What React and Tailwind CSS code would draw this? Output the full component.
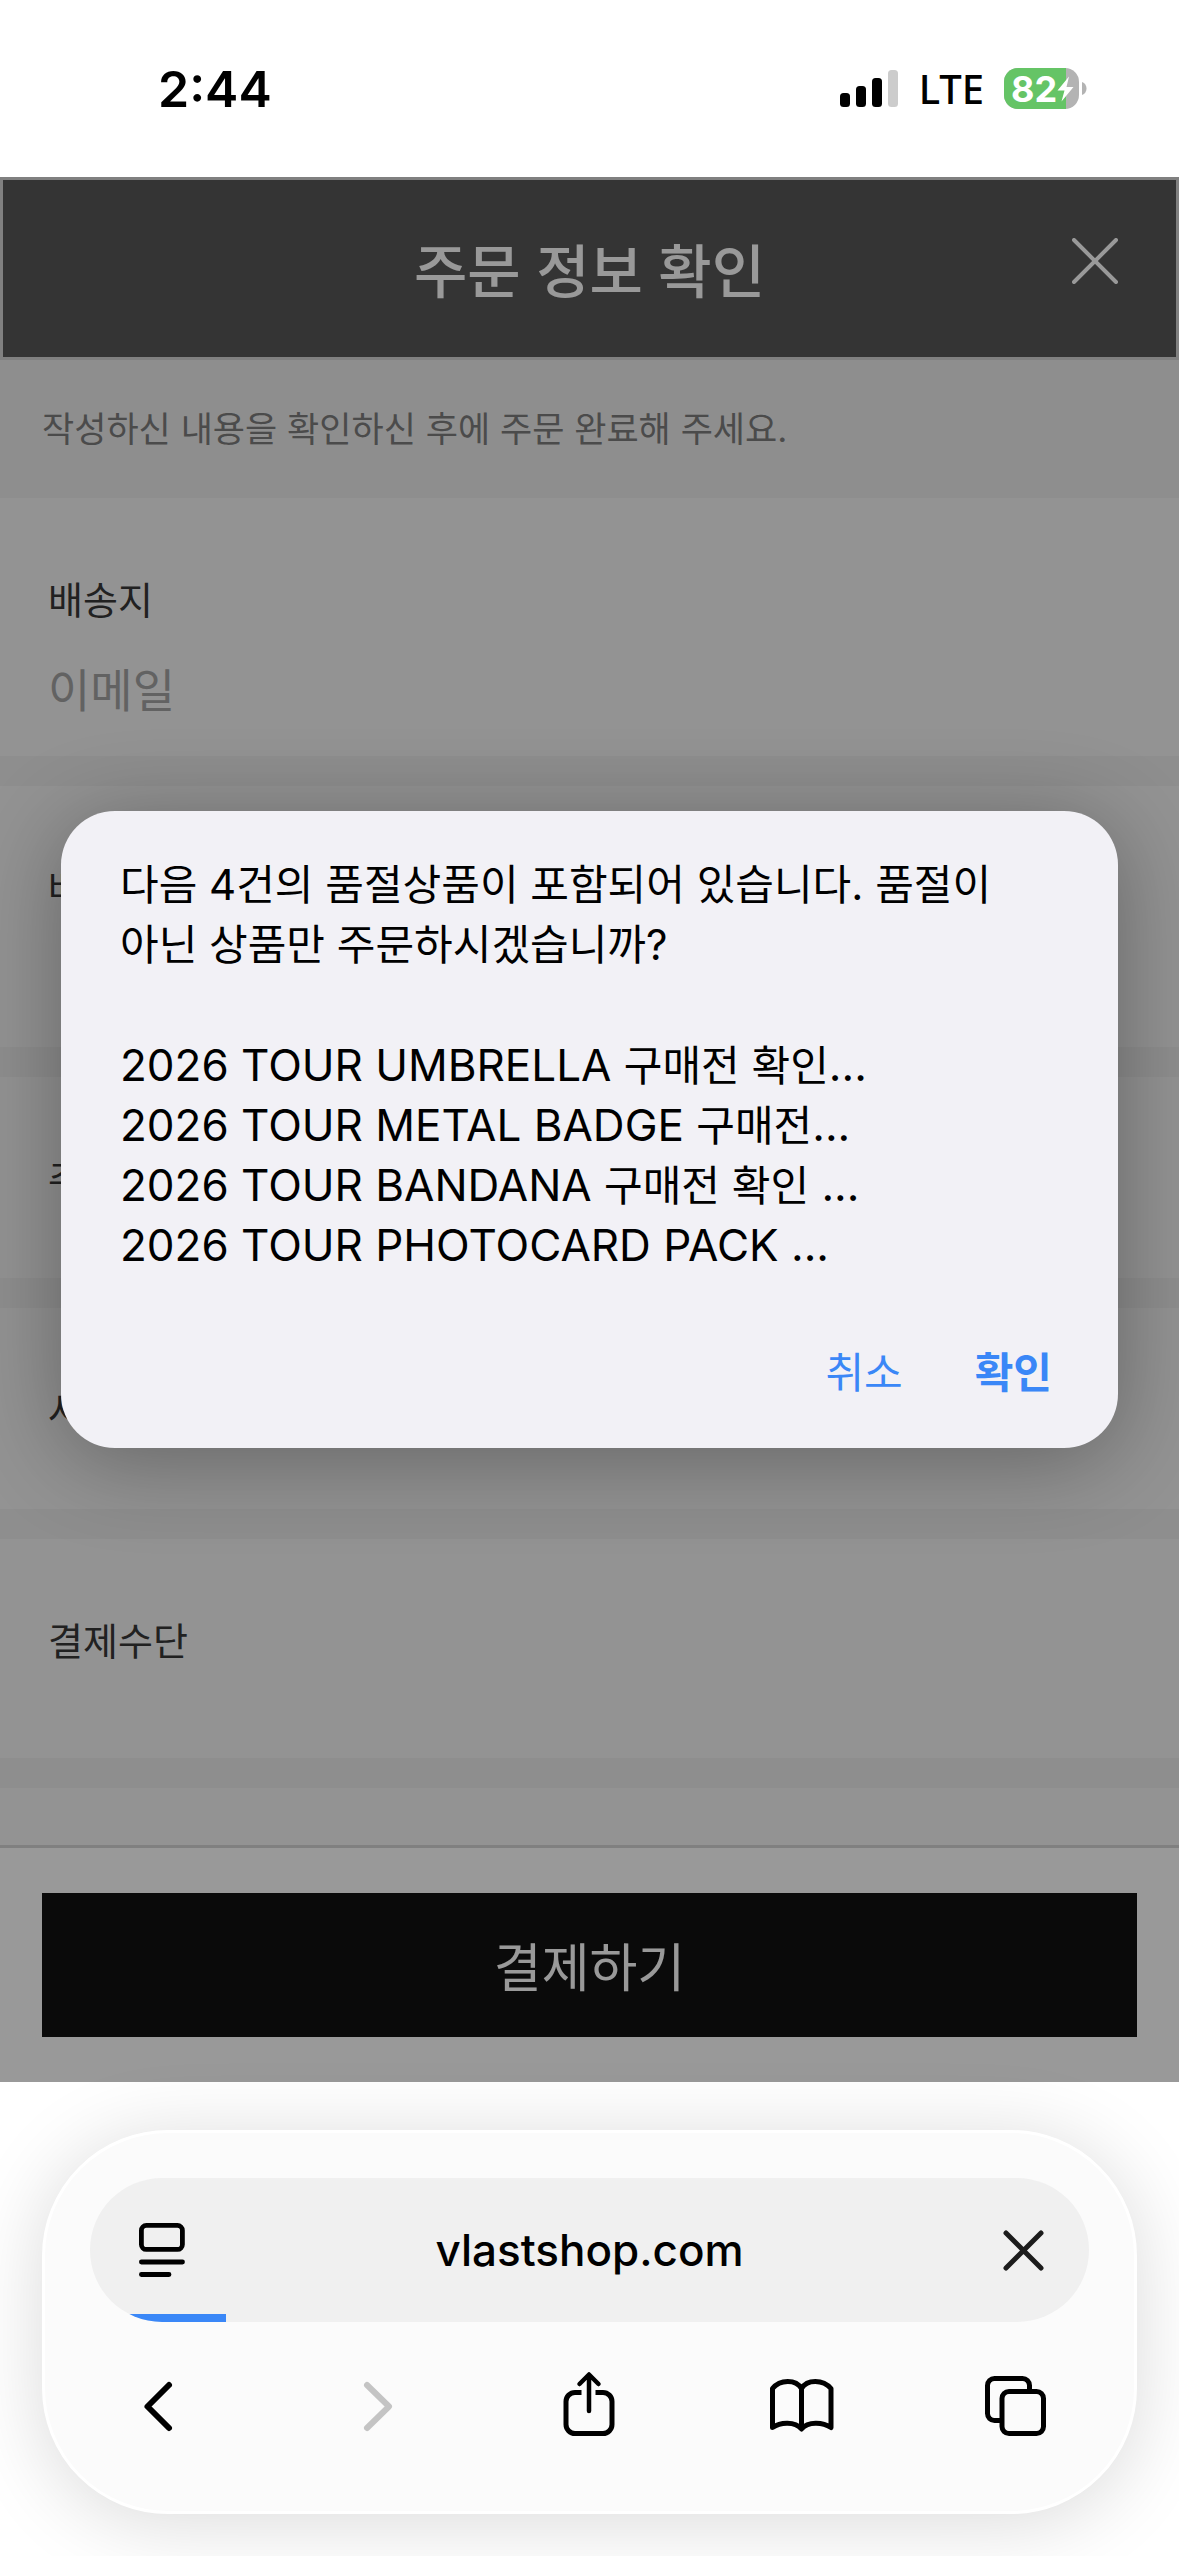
import React, { useState } from "react";

const soldOutItems = [
  { name: "2026 TOUR UMBRELLA ", note: "구매전 확인", tail: "..." },
  { name: "2026 TOUR METAL BADGE ", note: "구매전", tail: "..." },
  { name: "2026 TOUR BANDANA ", note: "구매전 확인", tail: " ..." },
  { name: "2026 TOUR PHOTOCARD PACK ", note: "", tail: "..." },
];

function StatusBar() {
  return (
    <div className="flex h-[177px] items-center justify-between bg-white pr-[92px] pl-[158px]">
      <span className="text-[50px] leading-[60px] font-semibold text-black">2:44</span>
      <div className="flex items-center">
        <svg className="h-[38px] w-[58px]" viewBox="0 0 58 38" aria-hidden="true">
          <rect x="0" y="23" width="10" height="14" rx="3.5" fill="#000" />
          <rect x="16" y="16" width="10" height="21" rx="3.5" fill="#000" />
          <rect x="32" y="8" width="10" height="29" rx="3.5" fill="#000" />
          <rect x="48" y="0" width="10" height="37" rx="3.5" fill="#ccc" />
        </svg>
        <span className="ml-[21px] font-['Noto_Sans',sans-serif] text-[40px] leading-[56px] font-medium text-black">
          LTE
        </span>
        <div className="relative ml-[20px] flex h-[41px] w-[75px] items-center rounded-[14px] bg-[#b3b3b3]">
          <div className="absolute inset-y-0 left-0 w-[62px] rounded-l-[14px] bg-[#65c466]" />
          <span className="relative pl-[7px] text-[36px] leading-[44px] font-bold text-white">82</span>
          <svg className="absolute top-[8px] right-[5px] h-[26px] w-[17px]" viewBox="0 0 17 26" aria-hidden="true">
            <path d="M12 0.5 L0.5 14.5 H7.5 L4.5 25.5 L16.5 11 H9.5 Z" fill="#fff" />
          </svg>
        </div>
        <svg className="ml-[3px] h-[13px] w-[5px]" viewBox="0 0 5 13" aria-hidden="true">
          <path d="M0 0 C6 2 6 11 0 13 Z" fill="#b3b3b3" />
        </svg>
      </div>
    </div>
  );
}

function Section({ title, className, children }) {
  return (
    <section className={`bg-[#f5f5f5] px-[48px] pt-[75px] ${className}`}>
      <h2 className="text-[38px] leading-[54px] text-[#383838]">{title}</h2>
      {children}
    </section>
  );
}

function OrderPage() {
  return (
    <div className="flex flex-1 flex-col bg-[#ededed]">
      <header className="relative flex h-[183px] items-center justify-center border-[3px] border-[#d6d6d6] bg-[#575757]">
        <h1 className="pt-[6px] text-[58px] leading-[72px] font-medium text-white">주문 정보 확인</h1>
        <button type="button" aria-label="닫기" className="absolute top-[58px] right-[58px]">
          <svg className="h-[46px] w-[46px]" viewBox="0 0 46 46" fill="none" stroke="#fff" strokeWidth="4" strokeLinecap="round">
            <path d="M2 2 L44 44 M44 2 L2 44" />
          </svg>
        </button>
      </header>
      <p className="px-[42px] py-[42px] text-[35px] leading-[54px] text-[#7d7d7d]">
        작성하신 내용을 확인하신 후에 주문 완료해 주세요.
      </p>
      <div className="flex flex-1 flex-col gap-[30px]">
        <Section title="배송지" className="pb-[33px]">
          <input
            type="email"
            aria-label="이메일"
            placeholder="이메일"
            className="mt-[30px] block h-[66px] w-full bg-transparent text-[46px] leading-[66px] outline-none placeholder:text-[#a3a3a3]"
          />
        </Section>
        <Section title="배송" className="pb-[132px]" />
        <Section title="주문" className="pb-[72px]" />
        <Section title="사은품" className="pb-[72px]" />
        <Section title="결제수단" className="pb-[90px]" />
        <div className="flex-1 bg-[#f5f5f5]" />
      </div>
      <footer className="border-t-[3px] border-[#d6d6d6] bg-white px-[42px] py-[45px]">
        <button type="button" className="flex h-[144px] w-full items-center justify-center bg-[#111] pt-[8px] text-[52px] text-white">
          결제하기
        </button>
      </footer>
    </div>
  );
}

function SoldOutDialog({ onClose }) {
  return (
    <div className="absolute inset-0 flex items-center bg-black/40 px-[61px]">
      <div
        role="alertdialog"
        aria-describedby="sold-out-message"
        className="w-full rounded-[54px] bg-[#f2f1f6] px-[59px] pt-[44px] pb-[45px] shadow-[0_12px_90px_rgba(0,0,0,0.32)]"
      >
        <div id="sold-out-message" className="text-[44px] leading-[60px] text-black">
          <p className="text-[42px] leading-[60px] break-keep">
            다음 4건의 품절상품이 포함되어 있습니다. 품절이 아닌 상품만 주문하시겠습니까?
          </p>
          <ul className="mt-[60px]">
            {soldOutItems.map((item) => (
              <li key={item.name} className="h-[60px] whitespace-pre">
                {item.name}
                <span className="text-[42px]">{item.note}</span>
                {item.tail}
              </li>
            ))}
          </ul>
        </div>
        <div className="mt-[68px] flex justify-end gap-[72px] px-[7px] text-[42px] leading-[60px] text-[#3a87f7]">
          <button type="button" onClick={onClose}>취소</button>
          <button type="button" onClick={onClose} className="font-bold">확인</button>
        </div>
      </div>
    </div>
  );
}

function NavButton({ label, className = "text-black", children }) {
  return (
    <button type="button" aria-label={label} className={className}>
      <svg
        className="h-[72px] w-[64px] overflow-visible"
        viewBox="0 0 64 72"
        fill="none"
        stroke="currentColor"
        strokeWidth="5"
        strokeLinecap="round"
        strokeLinejoin="round"
      >
        {children}
      </svg>
    </button>
  );
}

function BrowserBar() {
  return (
    <div className="relative bg-white px-[42px] pt-[48px] pb-[42px]">
      <div className="h-[384px] rounded-[126px] border-[3px] border-white bg-[#fbfbfb] px-[45px] pt-[45px] shadow-[0_8px_80px_rgba(0,0,0,0.15)]">
        <div className="relative grid h-[144px] grid-cols-[1fr_auto_1fr] items-center overflow-hidden rounded-full bg-[#f0f0f0] pr-[45px] pl-[45px]">
          <button type="button" aria-label="페이지 메뉴" className="justify-self-start pl-[4px]">
            <svg className="h-[54px] w-[46px]" viewBox="0 0 46 54" fill="none" stroke="#000" strokeWidth="4.8" strokeLinecap="round">
              <rect x="2.4" y="2.4" width="41" height="24" rx="5" />
              <path d="M2.4 39 H43.5 M2.4 51.5 H30" />
            </svg>
          </button>
          <a href="https://vlastshop.com" className="text-[44px] leading-[60px] font-medium text-black">
            vlastshop.com
          </a>
          <button type="button" aria-label="중단" className="justify-self-end">
            <svg className="h-[41px] w-[41px]" viewBox="0 0 41 41" fill="none" stroke="#1c1c1c" strokeWidth="5" strokeLinecap="round">
              <path d="M3 3 L38 38 M38 3 L3 38" />
            </svg>
          </button>
          <div className="absolute bottom-0 left-0 h-[8px] w-[136px] bg-[#3a87f7]" />
        </div>
        <nav className="mt-[48px] flex justify-between px-[38px]">
          <NavButton label="뒤로">
            <path d="M41 15 L19.5 36.5 L41 58" strokeWidth="6" />
          </NavButton>
          <NavButton label="앞으로" className="text-[#c4c4c4]">
            <path d="M24 15 L46 36.5 L24 58" strokeWidth="6" />
          </NavButton>
          <NavButton label="공유">
            <path d="M23.5 22.5 H17 a9 9 0 0 0 -9 9 V54.5 a9 9 0 0 0 9 9 H45 a9 9 0 0 0 9 -9 V31.5 a9 9 0 0 0 -9 -9 H37.5" strokeLinecap="butt" />
            <path d="M31 41 V5 M21.5 14 L31 4.5 L40.5 14" strokeWidth="4.5" />
          </NavButton>
          <NavButton label="책갈피">
            <path d="M29.5 18.5 C24 9 8 9 0.5 18.5 V57.5 C8 52 23 51 29.5 59 C36 51 51 52 59 57.5 V18.5 C51 9 35 9 29.5 18.5 V58" />
          </NavButton>
          <NavButton label="탭">
            <rect x="15" y="21.5" width="41.5" height="42" rx="7" />
            <path d="M15 50.5 H7.5 a7 7 0 0 1 -7 -7 V15.5 a7 7 0 0 1 7 -7 H35.5 a7 7 0 0 1 7 7 V21" strokeLinecap="butt" />
          </NavButton>
        </nav>
      </div>
    </div>
  );
}

function App() {
  const [dialogOpen, setDialogOpen] = useState(true);

  return (
    <div className="flex min-h-screen flex-col overflow-hidden bg-white font-['Inter','Noto_Sans_CJK_KR',sans-serif]">
      <StatusBar />
      <main className="relative flex flex-1 flex-col">
        <OrderPage />
        {dialogOpen && <SoldOutDialog onClose={() => setDialogOpen(false)} />}
      </main>
      <BrowserBar />
    </div>
  );
}

export default App;
